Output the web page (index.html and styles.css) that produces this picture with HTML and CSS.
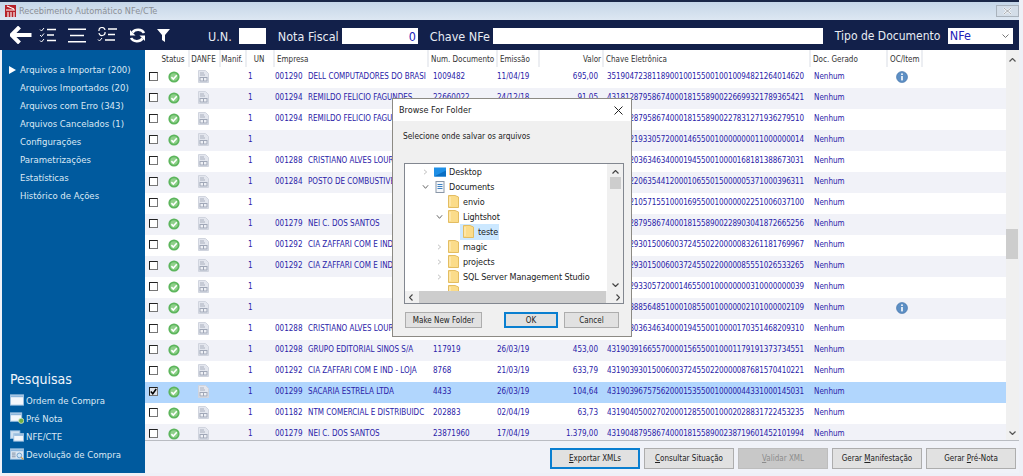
FILE: index.html
```html
<!DOCTYPE html>
<html lang="pt">
<head>
<meta charset="utf-8">
<title>Recebimento Automático NFe/CTe</title>
<link rel="stylesheet" href="styles.css">
</head>
<body>
<svg class="defs" width="0" height="0" aria-hidden="true">
  <symbol id="ok" viewBox="0 0 12 12">
    <circle cx="6" cy="6" r="5.6" fill="#5cb55c"/>
    <circle cx="6" cy="6" r="3.8" fill="#8fd08a"/>
    <path d="M3.400 6.200 5.300 8 8.800 4.300" fill="none" stroke="#fff" stroke-width="1.600"/>
  </symbol>
  <symbol id="doc" viewBox="0 0 11 13">
    <path d="M.5.5H7.500L10.500 3.500V12.500H.5Z" fill="#e3e6ee" stroke="#d0d4de"/>
    <path d="M2 3H6M2 5H7" stroke="#aab0be"/>
    <rect x="2" y="7.500" width="7" height="3.500" fill="#eef0f5" stroke="#a0a7b7"/>
    <path d="M5.500 7.500V11" stroke="#a0a7b7"/>
  </symbol>
  <symbol id="info" viewBox="0 0 12 12">
    <circle cx="6" cy="6" r="5.500" fill="#5d8fc4" stroke="#3f70a8" stroke-width=".6"/>
    <circle cx="6" cy="3.200" r=".9" fill="#fff"/>
    <rect x="5.200" y="5" width="1.600" height="4.400" fill="#fff"/>
  </symbol>
  <symbol id="folder" viewBox="0 0 11 13">
    <path d="M.5.5H7L10.500 2V12.500H.5Z" fill="#fbdc8a" stroke="#e3bd62"/>
    <path d="M2 2V11" stroke="#fff0c4"/>
  </symbol>
  <symbol id="win" viewBox="0 0 15 12">
    <rect x=".5" y=".5" width="14" height="11" fill="#f4f7fb" stroke="#9cc0e0"/>
    <rect x="1" y="1" width="13" height="2" fill="#8db6dc"/>
  </symbol>
  <symbol id="win-add" viewBox="0 0 15 12">
    <rect x=".5" y=".5" width="12" height="9" fill="#f4f7fb" stroke="#9cc0e0"/>
    <rect x="1" y="1" width="11" height="2" fill="#8db6dc"/>
    <circle cx="12" cy="9" r="2.800" fill="#6fae45" stroke="#dff0c8" stroke-width=".8"/>
  </symbol>
  <symbol id="win-stack" viewBox="0 0 15 12">
    <rect x=".5" y=".5" width="10" height="8" fill="#cfe0f0" stroke="#9cc0e0"/>
    <rect x="4" y="3.500" width="10.500" height="8" fill="#f4f7fb" stroke="#9cc0e0"/>
    <rect x="4.500" y="4" width="9.500" height="1.800" fill="#8db6dc"/>
  </symbol>
  <symbol id="win-find" viewBox="0 0 15 12">
    <rect x=".5" y=".5" width="14" height="11" fill="#dfe9f3" stroke="#9cc0e0"/>
    <rect x="1" y="1" width="13" height="2" fill="#8db6dc"/>
    <path d="M2 5H6M2 7H6M2 9H6" stroke="#7b8aa0"/>
    <circle cx="10" cy="7.500" r="2.500" fill="#cfe6f8" stroke="#6e9cc6"/>
    <path d="M12 9.500 14.500 12" stroke="#d89a3c" stroke-width="1.200"/>
  </symbol>
</svg>

<div class="app">
  <header class="titlebar">
    <svg class="logo" width="11" height="12" viewBox="0 0 11 12"><rect width="11" height="12" fill="#b5222a"/><path d="M1 5H10M3 7V12M6 7V12M9 7V12M2 1 9 4" stroke="#fff" stroke-width="1.100"/></svg>
    <span class="titletext">Recebimento Automático NFe/CTe</span>
    <button class="winclose" type="button">
      <svg width="9" height="8" viewBox="0 0 9 8"><path d="M1 1 8 7M8 1 1 7" stroke="#fff" stroke-width="2"/><path d="M1 1 8 7M8 1 1 7" stroke="#8a8f96" stroke-width=".8"/></svg>
    </button>
  </header>

  <div class="toolbar">
    <div class="tools">
      <svg class="t-back" width="22" height="18" viewBox="0 0 22 18"><path d="M9.500 1 1.500 9 9.500 17M2 9H21.500" fill="none" stroke="#fff" stroke-width="4"/></svg>
      <svg class="t-check" width="17" height="16" viewBox="0 0 17 16"><path d="M1 2.500 2.500 4 5 1M1 8 2.500 9.500 5 6.500M1 13.500 2.500 15 5 12" fill="none" stroke="#fff"/><path d="M8 2.500H17M8 8H15M8 13.500H17" stroke="#fff" stroke-width="1.500"/></svg>
      <svg class="t-menu" width="18" height="15" viewBox="0 0 18 15"><path d="M0 1.200H18M2 7.500H16M0 13.800H18" stroke="#fff" stroke-width="1.600"/></svg>
      <svg class="t-sync" width="20" height="16" viewBox="0 0 20 16"><path d="M2 4A3 3 0 0 1 8 3M8 5A3 3 0 0 1 2 6" fill="none" stroke="#fff" stroke-width="1.200"/><path d="M1 12.500 2.500 14 5 11" fill="none" stroke="#fff"/><path d="M11 2H20M11 7.500H18M8 13H18" stroke="#fff" stroke-width="1.500"/></svg>
      <svg class="t-refresh" width="17" height="15" viewBox="0 0 17 15"><path d="M15 5A6.500 5.500 0 0 0 3.500 4.500M2 10A6.500 5.500 0 0 0 13.500 10.500" fill="none" stroke="#fff" stroke-width="2.600"/><path d="M1 2V7.500H6.500ZM16 13V7.500H10.500Z" fill="#fff"/></svg>
      <svg class="t-filter" width="13" height="13" viewBox="0 0 13 13"><path d="M0 0H13L8 6V13L5 11V6Z" fill="#fff"/></svg>
    </div>
    <label class="tlabel l-un">U.N.</label><span class="field f-un"></span>
    <label class="tlabel l-nota">Nota Fiscal</label><span class="field f-nota">0</span>
    <label class="tlabel l-chave">Chave NFe</label><span class="field f-chave"></span>
    <label class="tlabel l-tipo">Tipo de Documento</label>
    <span class="field f-tipo">NFe<svg width="7" height="4" viewBox="0 0 7 4"><path d="M.5.5 3.500 3.500 6.500.5" fill="none" stroke="#777"/></svg></span>
  </div>

  <div class="main">
    <aside class="sidebar">
      <ul class="nav">
        <li class="current">Arquivos a Importar (200)</li>
        <li>Arquivos Importados (20)</li>
        <li>Arquivos com Erro (343)</li>
        <li>Arquivos Cancelados (1)</li>
        <li>Configurações</li>
        <li>Parametrizações</li>
        <li>Estatísticas</li>
        <li>Histórico de Ações</li>
      </ul>
      <h2 class="search-title">Pesquisas</h2>
      <ul class="search">
        <li><svg class="sicon"><use href="#win"/></svg>Ordem de Compra</li>
        <li><svg class="sicon"><use href="#win-add"/></svg>Pré Nota</li>
        <li><svg class="sicon"><use href="#win-stack"/></svg>NFE/CTE</li>
        <li><svg class="sicon"><use href="#win-find"/></svg>Devolução de Compra</li>
      </ul>
    </aside>

    <section class="content">
      <div class="gridarea">
        <div class="gridclip">
          <table class="grid">
            <colgroup>
              <col class="c-chk"><col class="c-st"><col class="c-da"><col class="c-ma"><col class="c-un"><col class="c-em"><col class="c-nu"><col class="c-dt"><col class="c-va"><col class="c-ch"><col class="c-do"><col class="c-oc"><col>
            </colgroup>
            <thead>
              <tr><th></th><th class="ctr">Status</th><th class="ctr">DANFE</th><th class="ctr">Manif.</th><th class="ctr">UN</th><th>Empresa</th><th>Num. Documento</th><th>Emissão</th><th class="rgt">Valor</th><th>Chave Eletrônica</th><th>Doc. Gerado</th><th>OC/Item</th><th class="fill"></th></tr>
            </thead>
            <tbody>
              <tr><td><i class="cb"></i></td><td class="ctr"><svg class="ic"><use href="#ok"/></svg></td><td class="ctr"><svg class="id"><use href="#doc"/></svg></td><td></td><td class="un">1</td><td><b class="code">001290</b>DELL COMPUTADORES DO BRASI</td><td class="nu">1009482</td><td>11/04/19</td><td class="va">695,00</td><td class="key">35190472381189001001550010010094821264014620</td><td class="dg">Nenhum</td><td class="oc"><svg class="ic"><use href="#info"/></svg></td><td></td></tr>
              <tr><td><i class="cb"></i></td><td class="ctr"><svg class="ic"><use href="#ok"/></svg></td><td class="ctr"><svg class="id"><use href="#doc"/></svg></td><td></td><td class="un">1</td><td><b class="code">001294</b>REMILDO FELICIO FAGUNDES</td><td class="nu">22660022</td><td>24/12/18</td><td class="va">91,05</td><td class="key">43181287958674000181558900226699321789365421</td><td class="dg">Nenhum</td><td></td><td></td></tr>
              <tr><td><i class="cb"></i></td><td class="ctr"><svg class="ic"><use href="#ok"/></svg></td><td class="ctr"><svg class="id"><use href="#doc"/></svg></td><td></td><td class="un">1</td><td><b class="code">001294</b>REMILDO FELICIO FAGUNDES</td><td class="nu">22783127</td><td>24/12/18</td><td class="va">91,05</td><td class="key">43181287958674000181558900227831271936279510</td><td class="dg">Nenhum</td><td></td><td></td></tr>
              <tr><td><i class="cb"></i></td><td class="ctr"><svg class="ic"><use href="#ok"/></svg></td><td class="ctr"><svg class="id"><use href="#doc"/></svg></td><td></td><td class="un">1</td><td></td><td class="nu"></td><td></td><td class="va"></td><td class="key">43190219330572000146550010000000011000000014</td><td class="dg">Nenhum</td><td></td><td></td></tr>
              <tr><td><i class="cb"></i></td><td class="ctr"><svg class="ic"><use href="#ok"/></svg></td><td class="ctr"><svg class="id"><use href="#doc"/></svg></td><td></td><td class="un">1</td><td><b class="code">001288</b>CRISTIANO ALVES LOUREIRO</td><td class="nu">168181</td><td>26/03/19</td><td class="va">120,00</td><td class="key">43190203634634000194550010000168181388673031</td><td class="dg">Nenhum</td><td></td><td></td></tr>
              <tr><td><i class="cb"></i></td><td class="ctr"><svg class="ic"><use href="#ok"/></svg></td><td class="ctr"><svg class="id"><use href="#doc"/></svg></td><td></td><td class="un">1</td><td><b class="code">001284</b>POSTO DE COMBUSTIVEIS</td><td class="nu">537</td><td>26/03/19</td><td class="va">80,00</td><td class="key">43190220635441200010655015000005371000396311</td><td class="dg">Nenhum</td><td></td><td></td></tr>
              <tr><td><i class="cb"></i></td><td class="ctr"><svg class="ic"><use href="#ok"/></svg></td><td class="ctr"><svg class="id"><use href="#doc"/></svg></td><td></td><td class="un">1</td><td></td><td class="nu"></td><td></td><td class="va"></td><td class="key">43190210571551000169550010000002251006037100</td><td class="dg">Nenhum</td><td></td><td></td></tr>
              <tr><td><i class="cb"></i></td><td class="ctr"><svg class="ic"><use href="#ok"/></svg></td><td class="ctr"><svg class="id"><use href="#doc"/></svg></td><td></td><td class="un">1</td><td><b class="code">001279</b>NEI C. DOS SANTOS</td><td class="nu">22890304</td><td>26/03/19</td><td class="va">90,00</td><td class="key">43190287958674000181558900228903041872665256</td><td class="dg">Nenhum</td><td></td><td></td></tr>
              <tr><td><i class="cb"></i></td><td class="ctr"><svg class="ic"><use href="#ok"/></svg></td><td class="ctr"><svg class="id"><use href="#doc"/></svg></td><td></td><td class="un">1</td><td><b class="code">001292</b>CIA ZAFFARI COM E IND - LOJA</td><td class="nu">8326</td><td>26/03/19</td><td class="va">210,00</td><td class="key">43190293015006003724550220000083261181769967</td><td class="dg">Nenhum</td><td></td><td></td></tr>
              <tr><td><i class="cb"></i></td><td class="ctr"><svg class="ic"><use href="#ok"/></svg></td><td class="ctr"><svg class="id"><use href="#doc"/></svg></td><td></td><td class="un">1</td><td><b class="code">001292</b>CIA ZAFFARI COM E IND - LOJA</td><td class="nu">8555</td><td>26/03/19</td><td class="va">340,00</td><td class="key">43190293015006003724550220000085551026533265</td><td class="dg">Nenhum</td><td></td><td></td></tr>
              <tr><td><i class="cb"></i></td><td class="ctr"><svg class="ic"><use href="#ok"/></svg></td><td class="ctr"><svg class="id"><use href="#doc"/></svg></td><td></td><td class="un">1</td><td></td><td class="nu"></td><td></td><td class="va"></td><td class="key">43190293305720001465500100000000310000000039</td><td class="dg">Nenhum</td><td></td><td></td></tr>
              <tr><td><i class="cb"></i></td><td class="ctr"><svg class="ic"><use href="#ok"/></svg></td><td class="ctr"><svg class="id"><use href="#doc"/></svg></td><td></td><td class="un">1</td><td></td><td class="nu"></td><td></td><td class="va"></td><td class="key">43190388564851000108550010000002101000002109</td><td class="dg">Nenhum</td><td class="oc"><svg class="ic"><use href="#info"/></svg></td><td></td></tr>
              <tr><td><i class="cb"></i></td><td class="ctr"><svg class="ic"><use href="#ok"/></svg></td><td class="ctr"><svg class="id"><use href="#doc"/></svg></td><td></td><td class="un">1</td><td><b class="code">001288</b>CRISTIANO ALVES LOUREIRO</td><td class="nu">170351</td><td>26/03/19</td><td class="va">150,00</td><td class="key">43190303634634000194550010000170351468209310</td><td class="dg">Nenhum</td><td></td><td></td></tr>
              <tr><td><i class="cb"></i></td><td class="ctr"><svg class="ic"><use href="#ok"/></svg></td><td class="ctr"><svg class="id"><use href="#doc"/></svg></td><td></td><td class="un">1</td><td><b class="code">001298</b>GRUPO EDITORIAL SINOS S/A</td><td class="nu">117919</td><td>26/03/19</td><td class="va">453,00</td><td class="key">43190391665570000156550010001179191373734551</td><td class="dg">Nenhum</td><td></td><td></td></tr>
              <tr><td><i class="cb"></i></td><td class="ctr"><svg class="ic"><use href="#ok"/></svg></td><td class="ctr"><svg class="id"><use href="#doc"/></svg></td><td></td><td class="un">1</td><td><b class="code">001292</b>CIA ZAFFARI COM E IND - LOJA</td><td class="nu">8768</td><td>21/03/19</td><td class="va">633,79</td><td class="key">43190393015006003724550220000087681570410221</td><td class="dg">Nenhum</td><td></td><td></td></tr>
              <tr class="sel"><td><i class="cb on"><svg width="7" height="7" viewBox="0 0 7 7"><path d="M.8 3.500 2.800 5.800 6.200 1" fill="none" stroke="#000" stroke-width="1.500"/></svg></i></td><td class="ctr"><svg class="ic"><use href="#ok"/></svg></td><td class="ctr"><svg class="id"><use href="#doc"/></svg></td><td></td><td class="un">1</td><td><b class="code">001299</b>SACARIA ESTRELA LTDA</td><td class="nu">4433</td><td>26/03/19</td><td class="va">104,64</td><td class="key">43190396757562000153550010000044331000145031</td><td class="dg">Nenhum</td><td></td><td></td></tr>
              <tr><td><i class="cb"></i></td><td class="ctr"><svg class="ic"><use href="#ok"/></svg></td><td class="ctr"><svg class="id"><use href="#doc"/></svg></td><td></td><td class="un">1</td><td><b class="code">001182</b>NTM COMERCIAL E DISTRIBUIDC</td><td class="nu">202883</td><td>02/04/19</td><td class="va">63,73</td><td class="key">43190405002702000128550010002028831722453235</td><td class="dg">Nenhum</td><td></td><td></td></tr>
              <tr><td><i class="cb"></i></td><td class="ctr"><svg class="ic"><use href="#ok"/></svg></td><td class="ctr"><svg class="id"><use href="#doc"/></svg></td><td></td><td class="un">1</td><td><b class="code">001279</b>NEI C. DOS SANTOS</td><td class="nu">23871960</td><td>17/04/19</td><td class="va">1.379,00</td><td class="key">43190487958674000181558900238719601452101994</td><td class="dg">Nenhum</td><td></td><td></td></tr>
            </tbody>
          </table>
        </div>
        <div class="vscroll">
          <svg width="7" height="4" viewBox="0 0 7 4"><path d="M.5 3.500 3.500.5 6.500 3.500" fill="none" stroke="#555" stroke-width="1.200"/></svg>
          <span class="thumb"></span>
          <svg width="7" height="4" viewBox="0 0 7 4"><path d="M.5.5 3.500 3.500 6.500.5" fill="none" stroke="#555" stroke-width="1.200"/></svg>
        </div>
      </div>
      <footer class="actions">
        <button class="btn primary" type="button"><u>E</u>xportar XMLs</button>
        <button class="btn" type="button"><u>C</u>onsultar Situação</button>
        <button class="btn off" type="button"><u>V</u>alidar XML</button>
        <button class="btn" type="button">Gerar <u>M</u>anifestação</button>
        <button class="btn" type="button">Gerar <u>P</u>ré-Nota</button>
      </footer>
    </section>
  </div>
</div>

<div class="dialog">
  <div class="dlg-head"><span>Browse For Folder</span>
    <svg width="9" height="9" viewBox="0 0 9 9"><path d="M.5.5 8.500 8.500M8.500.5 .5 8.500" stroke="#222"/></svg>
  </div>
  <p class="dlg-msg">Selecione onde salvar os arquivos</p>
  <div class="tree">
    <div class="tree-body">
      <ul class="nodes">
        <li class="n1"><svg class="tw" viewBox="0 0 6 8"><path d="M1 1 4.500 4 1 7" fill="none" stroke="#aaa"/></svg><svg class="nico wide" viewBox="0 0 12 9"><rect width="12" height="9" fill="#1e8fe6"/><path d="M0 9 12 3V9Z" fill="#0b6fc2"/></svg>Desktop</li>
        <li class="n1"><svg class="tw" viewBox="0 0 8 6"><path d="M1 1 4 4.500 7 1" fill="none" stroke="#555"/></svg><svg class="nico wide" viewBox="0 0 12 12"><rect x="2" y=".5" width="8" height="11" fill="#f5f7fa" stroke="#8a97a8"/><path d="M3.500 3.500H8.500M3.500 5.500H8.500M3.500 7.500H8.500" stroke="#3e82c4"/></svg>Documents</li>
        <li class="n2"><span class="tw"></span><svg class="nico"><use href="#folder"/></svg>envio</li>
        <li class="n2"><svg class="tw" viewBox="0 0 8 6"><path d="M1 1 4 4.500 7 1" fill="none" stroke="#555"/></svg><svg class="nico"><use href="#folder"/></svg>Lightshot</li>
        <li class="n3"><span class="picked"><svg class="nico"><use href="#folder"/></svg>teste</span></li>
        <li class="n2"><svg class="tw" viewBox="0 0 6 8"><path d="M1 1 4.500 4 1 7" fill="none" stroke="#aaa"/></svg><svg class="nico"><use href="#folder"/></svg>magic</li>
        <li class="n2"><svg class="tw" viewBox="0 0 6 8"><path d="M1 1 4.500 4 1 7" fill="none" stroke="#aaa"/></svg><svg class="nico"><use href="#folder"/></svg>projects</li>
        <li class="n2"><svg class="tw" viewBox="0 0 6 8"><path d="M1 1 4.500 4 1 7" fill="none" stroke="#aaa"/></svg><svg class="nico"><use href="#folder"/></svg>SQL Server Management Studio</li>
        <li class="n2"><span class="tw"></span><svg class="nico"><use href="#folder"/></svg></li>
      </ul>
      <div class="tree-v">
        <svg width="7" height="4" viewBox="0 0 7 4"><path d="M.5 3.500 3.500.5 6.500 3.500" fill="none" stroke="#444" stroke-width="1.200"/></svg>
        <span class="tv-thumb"></span>
        <svg class="tv-down" width="7" height="4" viewBox="0 0 7 4"><path d="M.5.5 3.500 3.500 6.500.5" fill="none" stroke="#444" stroke-width="1.200"/></svg>
      </div>
    </div>
    <div class="tree-h">
      <svg width="4" height="7" viewBox="0 0 4 7"><path d="M3.500.5 .5 3.500 3.500 6.500" fill="none" stroke="#444" stroke-width="1.200"/></svg>
      <span class="th-thumb"></span>
      <svg width="4" height="7" viewBox="0 0 4 7"><path d="M.5.5 3.500 3.500 .5 6.500" fill="none" stroke="#444" stroke-width="1.200"/></svg>
    </div>
  </div>
  <div class="dlg-actions">
    <button class="dbtn mk" type="button">Make New Folder</button>
    <button class="dbtn ok" type="button">OK</button>
    <button class="dbtn cancel" type="button">Cancel</button>
  </div>
</div>
</body>
</html>
```
FILE: styles.css
```css
* { box-sizing: border-box; }
html, body { margin: 0; padding: 0; height: 100%; overflow: hidden; }
body { background: #eef0f7; font-family: "DejaVu Sans Condensed", "DejaVu Sans", sans-serif; font-size: 8px; color: #222; position: relative; }
ul { list-style: none; margin: 0; padding: 0; }
button { font-family: inherit; }
.defs { position: absolute; }

.app { width: 1019px; height: 473px; display: flex; flex-direction: column; border-top: 2px solid #1a2748; background: #f0f2f8; }

.titlebar { height: 18px; display: flex; align-items: center; padding-left: 5px; background: linear-gradient(#c5d6e8, #dde7f2); color: #8b8f96; flex: none; }
.logo { flex: none; }
.titletext { margin-left: 3px; font-size: 9.1px; }
.winclose { margin-left: auto; margin-right: 0; width: 23px; height: 12px; padding: 0; border: 1px solid #a9b2bc; background: #d3dde8; display: flex; align-items: center; justify-content: center; }

.toolbar { height: 30px; flex: none; background: #12204a; display: flex; align-items: center; color: #e8ecf4; padding-left: 10px; font-size: 12.5px; }
.tools { display: flex; align-items: center; width: 198px; flex: none; }
.tools svg { flex: none; }
.t-check { margin-left: 7px; }
.t-menu { margin-left: 12px; }
.t-sync { margin-left: 11px; }
.t-refresh { margin-left: 12px; }
.t-filter { margin-left: 11px; }
.tlabel { white-space: nowrap; margin-top: 2px; }
.field { height: 16px; margin-top: 2px; background: #fff; display: block; flex: none; color: #2222b8; }
.f-un { width: 27px; margin-left: 7px; }
.l-nota { margin-left: 12px; width: 56px; }
.f-nota { width: 76px; margin-left: 8px; text-align: right; padding-right: 2px; line-height: 17px; }
.l-chave { margin-left: 12px; width: 56px; }
.f-chave { width: 330px; margin-left: 7px; }
.l-tipo { margin-left: 12px; width: 106px; font-size: 12px; }
.f-tipo { width: 65px; margin-left: 7px; padding-left: 2px; line-height: 16px; display: flex; align-items: center; justify-content: space-between; padding-right: 4px; font-weight: 500; }

.main { flex: 1; display: flex; min-height: 0; padding-left: 2px; }

.sidebar { width: 143px; flex: none; background: #005a9e; color: #dbe8f4; display: flex; flex-direction: column; padding-top: 11px; }
.nav li { height: 18px; line-height: 18px; padding-left: 18px; font-size: 9.5px; white-space: nowrap; position: relative; }
.nav .current::before { content: ""; position: absolute; left: 7px; top: 5px; border-left: 7px solid #fff; border-top: 4px solid transparent; border-bottom: 4px solid transparent; }
.search-title { margin: 164px 0 0 8px; font-size: 14px; line-height: 20px; font-weight: 400; color: #f2f6fb; }
.search { margin-top: 2px; padding-left: 8px; }
.search li { height: 18px; display: flex; align-items: center; font-size: 9.5px; white-space: nowrap; }
.sicon { width: 14px; height: 12px; margin-right: 2px; flex: none; }

.content { flex: 1; min-width: 0; display: flex; flex-direction: column; }
.gridarea { height: 391px; flex: none; display: flex; background: #fff; border-bottom: 1px solid #b9bcc2; }
.gridclip { width: 861px; overflow: hidden; flex: none; }
.grid { width: 861px; border-collapse: collapse; table-layout: fixed; color: #2a22a8; }
.c-chk { width: 15px; } .c-st { width: 29px; } .c-da { width: 31px; } .c-ma { width: 26px; } .c-un { width: 28px; }
.c-em { width: 154px; } .c-nu { width: 69px; } .c-dt { width: 42px; } .c-va { width: 64px; } .c-ch { width: 207px; }
.c-do { width: 77px; } .c-oc { width: 35px; }
.grid th { height: 17px; padding: 2px 0 0 2px; font-weight: 400; color: #333; text-align: left; white-space: nowrap; overflow: hidden; border-right: 2px solid #eceef2; }
.grid th:first-child, .grid th.fill { border-right: 0; }
.grid td { height: 21px; padding: 0 0 2px; white-space: nowrap; overflow: hidden; vertical-align: middle; }
.grid tbody tr:nth-child(even) { background: #f1f2f8; }
.grid tbody tr.sel { background: #b1d6fd; }
.grid .ctr { text-align: center; padding-left: 0; padding-right: 2px; }
.grid td.oc { padding-right: 6px; }
.grid .rgt { text-align: right; padding-right: 1px; }
.cb { display: block; width: 9px; height: 9px; margin-left: 4px; border: 1px solid #222; border-bottom-color: #777; border-right-color: #777; background: #fff; }
.cb.on { background: #dfe3ea; }
.cb svg { display: block; }
.ic { width: 12px; height: 12px; display: block; margin: 0 auto; }
.id { width: 11px; height: 13px; display: block; margin: 0 auto; }
.un { padding-left: 2px !important; }
.code { display: inline-block; width: 34px; padding-left: 1px; font-weight: 400; }
.grid td.nu { padding-left: 5px; }
.grid td.va { text-align: right; padding-right: 5px; }
.grid td.key { padding-left: 4px; letter-spacing: -.1px; }
.grid td.dg { padding-left: 4px; }

.vscroll { width: 13px; flex: none; background: #f0f0f0; position: relative; display: flex; flex-direction: column; align-items: center; justify-content: space-between; padding: 8px 0 5px; }
.thumb { position: absolute; left: 0; top: 179px; width: 12px; height: 30px; background: #cdcdcd; }

.actions { flex: 1; display: flex; align-items: flex-start; justify-content: flex-end; padding: 7px 3px 0 0; gap: 4px; }
.btn { width: 90px; height: 21px; padding: 0; border: 1px solid #adadad; background: #e1e1e1; font-size: 8px; color: #222; }
.btn.primary { border: 2px solid #0a7fd0; }
.btn.off { background: #c8c8c8; color: #8c8c8c; border-color: #bdbdbd; }

.dialog { position: absolute; left: 392px; top: 98px; width: 240px; height: 239px; background: #f0f0f0; border: 1px solid #8c8a84; display: flex; flex-direction: column; }
.dlg-head { height: 22px; background: #fff; display: flex; align-items: center; justify-content: space-between; padding: 0 8px 0 6px; font-size: 9px; color: #222; flex: none; }
.dlg-msg { margin: 10px 0 0 10px; font-size: 8.3px; line-height: 10px; color: #222; }
.tree { margin: 22px 0 0 11px; width: 220px; height: 141px; background: #fff; border: 1px solid #828790; display: flex; flex-direction: column; font-size: 9px; letter-spacing: -.1px; color: #222; }
.tree-body { flex: 1; display: flex; min-height: 0; }
.nodes { flex: 1; overflow: hidden; padding-top: 0; }
.nodes li { height: 15px; display: flex; align-items: center; white-space: nowrap; }
.n1 { padding-left: 17px; }
.n2 { padding-left: 31px; }
.n3 { padding-left: 55px; }
.tw { width: 7px; height: 6px; flex: none; display: block; margin-right: 5px; }
.nico { width: 11px; height: 13px; flex: none; margin-right: 4px; }
.nico.wide { width: 12px; height: 12px; margin-right: 3px; }
.picked { display: flex; align-items: center; background: #cce8ff; height: 16px; width: 39px; padding-left: 3px; }
.tree-v { width: 16px; flex: none; background: #f0f0f0; position: relative; display: flex; flex-direction: column; align-items: center; padding-top: 6px; }
.tv-thumb { width: 11px; height: 12px; background: #cdcdcd; margin-top: 3px; }
.tv-down { margin-top: auto; margin-bottom: 4px; }
.tree-h { height: 12px; flex: none; background: #f0f0f0; display: flex; align-items: center; padding: 0 3px 0 4px; }
.th-thumb { flex: 1; height: 12px; background: #cdcdcd; margin: 0 10px 0 6px; }
.dlg-actions { display: flex; margin: 8px 0 0 12px; }
.dbtn { height: 16px; padding: 0; border: 1px solid #adadad; background: #e1e1e1; font-size: 8px; color: #222; }
.mk { width: 77px; }
.ok { width: 54px; margin-left: 22px; border: 2px solid #0a7fd0; }
.cancel { width: 55px; margin-left: 6px; }
```
